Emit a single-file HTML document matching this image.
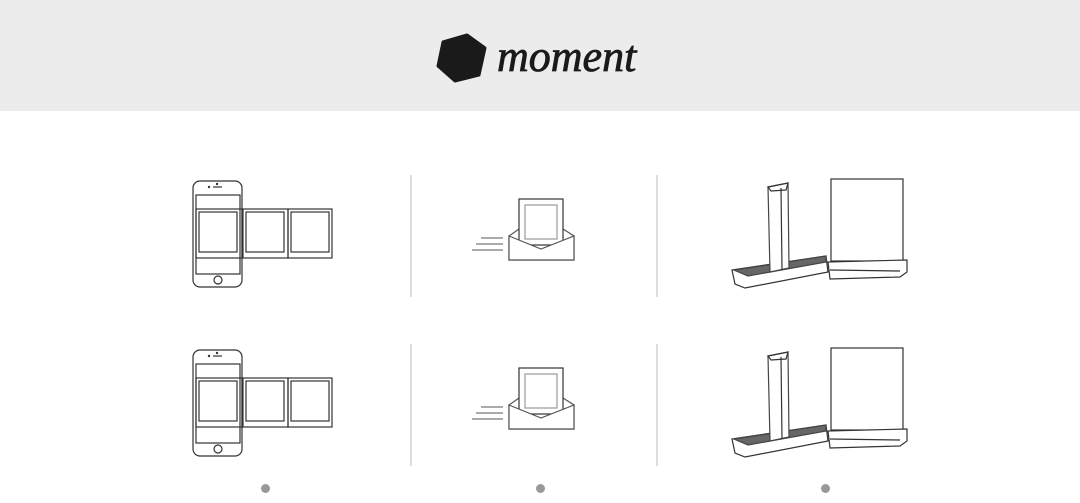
<!DOCTYPE html><html><head><style>
body{margin:0;width:1080px;height:503px;background:#fff;overflow:hidden;font-family:"Liberation Serif",serif}
.hdr{position:absolute;left:0;top:0;width:1080px;height:111px;background:#ececec}
.logo{position:absolute;left:497px;top:31px;font-size:44px;font-style:italic;font-weight:normal;color:#1a1a1a;-webkit-text-stroke:0.8px #1a1a1a}
.dot{position:absolute;top:484px;width:9px;height:9px;border-radius:50%;background:#999}
</style></head><body>
<div class="hdr"></div>
<svg style="position:absolute;left:0;top:0" width="1080" height="111"><polygon points="467,35 485,48 479,75 455,81 438,66 443,42" fill="#1a1a1a" stroke="#1a1a1a" stroke-width="3" stroke-linejoin="round"/></svg>
<div class="logo">moment</div>
<svg style="position:absolute;left:0;top:0" width="1080" height="503">
<defs><g id="r" fill="none" stroke="#333" stroke-width="1.2">
<rect x="193" y="181" width="49" height="106" rx="7"/>
<rect x="196" y="195" width="44" height="79"/>
<circle cx="218" cy="280" r="4"/>
<line x1="213" y1="187" x2="222" y2="187"/><circle cx="209" cy="187" r=".6"/><circle cx="217" cy="184" r=".6"/>
<rect x="196" y="209" width="46" height="49"/><rect x="199" y="212" width="38" height="40"/>
<rect x="243" y="209" width="45" height="49"/><rect x="246" y="212" width="38" height="40"/>
<rect x="288" y="209" width="44" height="49"/><rect x="291" y="212" width="38" height="40"/>
<line x1="411" y1="175" x2="411" y2="297" stroke="#ddd" stroke-width="2"/>
<line x1="657" y1="175" x2="657" y2="297" stroke="#ddd" stroke-width="2"/>
<polyline points="519,229 509,236 509,260 574,260 574,236 563,229" stroke="#555"/>
<rect x="519" y="199" width="44" height="46" fill="#fff"/><rect x="525" y="205" width="32" height="34" stroke="#999"/>
<polygon points="509,236 541,249 574,236 574,260 509,260" fill="#fff" stroke="#555"/>
<line x1="481" y1="238" x2="503" y2="238" stroke="#777"/><line x1="476" y1="244" x2="503" y2="244" stroke="#777"/><line x1="472" y1="250" x2="503" y2="250" stroke="#777"/>
<path d="M732,270 L826,256 L828,272 L745,288 L735,284Z" fill="#fff"/><path d="M734,270 L826,256 L826,262 L748,276Z" fill="#666" stroke="#444"/>
<polygon points="768,187 788,183 789,268 770,272" fill="#fff" stroke="#444"/><line x1="781" y1="188" x2="782" y2="270"/><polygon points="768,187 788,183 786,190 771,191"/>
<rect x="831" y="179" width="72" height="82" fill="#fff"/>
<path d="M828,262 L907,260 L907,272 L900,277 L830,279Z" fill="#fff"/><line x1="830" y1="270" x2="900" y2="271"/>
</g></defs>
<use href="#r"/><use href="#r" y="169"/>
</svg>
<div class="dot" style="left:261px"></div><div class="dot" style="left:536px"></div><div class="dot" style="left:821px"></div>
</body></html>
